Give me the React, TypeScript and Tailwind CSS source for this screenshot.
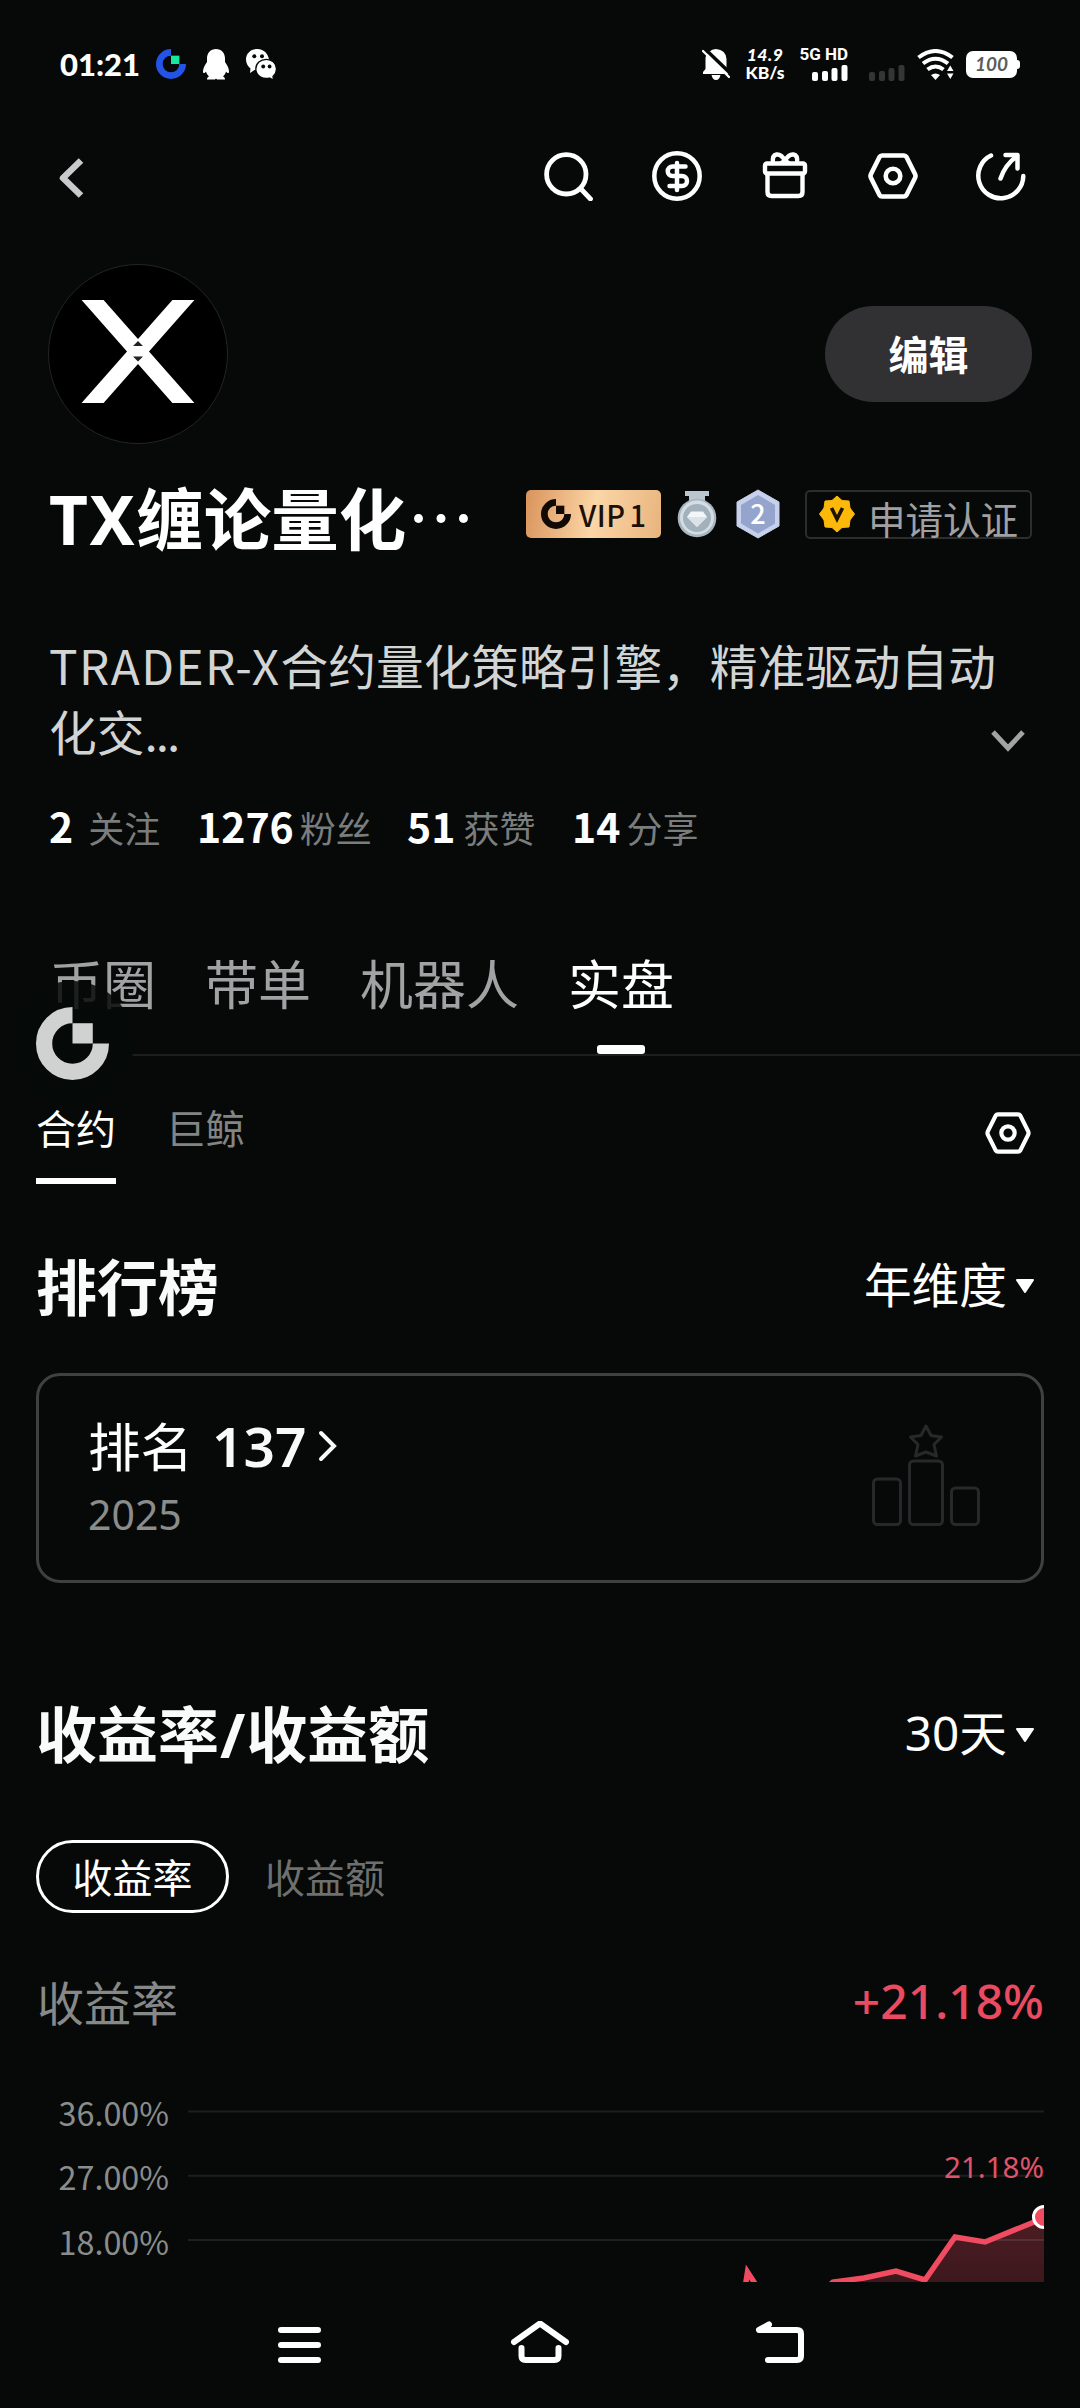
import type { ReactNode } from "react";

const STATS = [
  { value: "2", label: "关注", width: "w-[148px]", gap: "gap-[15px]" },
  { value: "1276", label: "粉丝", width: "w-[210px]", gap: "gap-[6px]" },
  { value: "51", label: "获赞", width: "w-[165px]", gap: "gap-[8px]" },
  { value: "14", label: "分享", width: "w-[140px]", gap: "gap-[6px]" },
];

const TABS = ["币圈", "带单", "机器人", "实盘"];
const ACTIVE_TAB = "实盘";

const AXIS = ["36.00%", "27.00%", "18.00%"];

const LINE = "M636 214L645 206L676 202L708 195L737 204L767 161L797 166L856 142";

function GateLogo({ size, ring, square }: { size: number; ring: string; square: string }) {
  return (
    <svg width={size} height={size} viewBox="0 0 72 72" className="shrink-0">
      <path d="M36 8A28 28 0 1 0 64 36" fill="none" stroke={ring} strokeWidth="16" />
      <rect x="36" y="16" width="20" height="20" fill={square} />
    </svg>
  );
}

function HexIcon({ className }: { className: string }) {
  return (
    <svg viewBox="0 0 50 46" className={className} fill="none" stroke="#fff" strokeWidth="4.6" strokeLinejoin="round">
      <path d="M14 2.500H36Q37.600 2.500 38.500 4L47 21Q48 23 47 25L38.500 42Q37.600 43.500 36 43.500H14Q12.400 43.500 11.500 42L3 25Q2 23 3 21L11.500 4Q12.400 2.500 14 2.500Z" />
      <circle cx="25" cy="23" r="7.300" />
    </svg>
  );
}

function SignalBars({ color }: { color: string }) {
  return (
    <svg width="36" height="16" viewBox="0 0 36 16" fill={color}>
      <rect x="0" y="7" width="6" height="9" rx="2" />
      <rect x="10" y="6" width="6" height="10" rx="2" />
      <rect x="19.500" y="3" width="6" height="13" rx="2" />
      <rect x="29.500" y="0" width="6" height="16" rx="2" />
    </svg>
  );
}

function StatusBar() {
  return (
    <div className="flex h-[128px] shrink-0 items-center pl-[60px] pr-[60px]">
      <span className="w-[96px] font-['Lato','Liberation_Sans',sans-serif] text-[31px] leading-none font-black">
        01:21
      </span>
      <GateLogo size={30} ring="#2354e6" square="#17e6a1" />
      {/* QQ */}
      <svg width="26" height="31" viewBox="0 0 26 31" fill="#fff" className="ml-[17px]">
        <path d="M13 0C7.500 0 4 4 4 9.500V13C2 16 0 19 0 22.500C0 24.500 1.500 24.500 3 22.500C3.500 24.500 4.500 26 6 27.500C4.500 28 4 29 4 30.500H12L13 29.500L14 30.500H22C22 29 21.500 28 20 27.500C21.500 26 22.500 24.500 23 22.500C24.500 24.500 26 24.500 26 22.500C26 19 24 16 22 13V9.500C22 4 18.500 0 13 0Z" />
      </svg>
      {/* WeChat */}
      <svg width="31" height="31" viewBox="0 0 31 31" className="ml-[17px]">
        <path d="M11.500 0C5 0 0 4.500 0 10.500C0 14.500 2 17.500 4.500 19.500L4 24L8.500 21H12L23 11C22.500 5 18 0 11.500 0Z" fill="#fff" />
        <circle cx="8.300" cy="7.300" r="2" fill="#060908" />
        <circle cx="16" cy="7.300" r="2" fill="#060908" />
        <path d="M20.300 10.300C26 10.300 30.500 14.500 30.500 20C30.500 23 29 25.500 27 27.500L27.500 31L23.500 29C17 31 9.800 26.500 9.800 20C9.800 14.500 14.500 10.300 20.300 10.300Z" fill="#fff" stroke="#060908" strokeWidth="1.300" />
        <circle cx="17.200" cy="17.500" r="1.900" fill="#060908" />
        <circle cx="23.600" cy="17.500" r="1.900" fill="#060908" />
      </svg>

      <svg width="28" height="31" viewBox="0 0 28 31" className="ml-auto" fill="#fff">
        <path d="M7 3Q10 0 14 0Q24 1 24.500 10V20L26.500 23L27 25H1V23L3.500 20V9Q4 5 7 3Z" />
        <path d="M9.500 26H18.500Q17.500 31 14 31Q10.500 31 9.500 26Z" />
        <path d="M2 -1L29 25" stroke="#060908" strokeWidth="3.500" />
        <path d="M1 2L27 28" stroke="#fff" strokeWidth="2.300" strokeLinecap="round" />
      </svg>
      <div className="ml-[16px] flex w-[38px] flex-col items-center font-['Lato',sans-serif] text-[17.500px] leading-[18px] font-black">
        <span className="tracking-[0.5px] italic">14.9</span>
        <span>KB/s</span>
      </div>
      <div className="ml-[16px] flex w-[48px] flex-col items-end gap-[4px]">
        <span className="font-['Roboto',sans-serif] text-[17px] leading-[13px] font-bold whitespace-nowrap">5G HD</span>
        <SignalBars color="#fff" />
      </div>
      <div className="mt-[17px] ml-[21px]">
        <SignalBars color="#343636" />
      </div>
      <svg width="38" height="31" viewBox="0 0 38 31" fill="none" stroke="#fff" strokeWidth="4" className="ml-[12px]">
        <path d="M1.500 8.500Q18.500 -4.500 35.500 8.500" />
        <path d="M6 14.500Q18.500 5 31 14.500" />
        <path d="M10.500 20.500Q18.500 14.500 26.500 20.500" />
        <path d="M14 26Q18.500 23 23 26L18.500 31Z" fill="#fff" stroke="none" />
        <path d="M30 22L33.300 16.500L36.500 22ZM30 24.500L33.300 30L36.500 24.500Z" fill="#fff" stroke="none" />
      </svg>
      <div className="ml-[11px] flex items-center">
        <div className="flex h-[27px] w-[51px] items-center justify-center rounded-[7px] bg-white font-['Lato',sans-serif] text-[19px] font-bold text-[#5c5c5c] italic">
          100
        </div>
        <div className="h-[9px] w-[3px] rounded-r-sm bg-white" />
      </div>
    </div>
  );
}

function TopBar() {
  return (
    <div className="flex h-[96px] shrink-0 items-center pr-[54px] pl-[56px]">
      <svg width="28" height="40" viewBox="0 0 28 40" fill="none" stroke="#c9cacc" strokeWidth="6.500" className="mt-[3px]">
        <path d="M25 2.500L7 20L25 37.500" strokeLinejoin="round" />
      </svg>
      <div className="ml-auto flex items-center gap-[58px]">
        <svg width="50" height="50" viewBox="0 0 50 50" fill="none" stroke="#fff" strokeWidth="4.800" strokeLinecap="round">
          <circle cx="22.300" cy="23.300" r="19.700" />
          <path d="M37 38L46.500 48" />
        </svg>
        <svg width="50" height="50" viewBox="0 0 50 50" fill="none" stroke="#fff" strokeWidth="4.500" strokeLinecap="round">
          <circle cx="25" cy="25" r="22.700" />
          <path d="M33.500 15.500H20.500A4.700 4.700 0 0 0 20.500 25H30A4.900 4.900 0 0 1 30 35H17.500M25 12V39" />
        </svg>
        <svg width="50" height="50" viewBox="0 0 50 50" fill="none" stroke="#fff" strokeWidth="4.400" strokeLinejoin="round">
          <rect x="5" y="12.500" width="40" height="10" rx="2" />
          <path d="M7.500 22.500V41Q7.500 45 11.500 45H38.500Q42.500 45 42.500 41V22.500" />
          <path d="M13 12.500C11.500 1 20 1 25 9.500C30 1 38.500 1 37 12.500" />
          <path d="M20 12.500L25 8.500L30 12.500" strokeWidth="3" />
        </svg>
        <HexIcon className="h-[46px] w-[50px]" />
        <svg width="50" height="50" viewBox="0 0 50 50" fill="none" stroke="#fff" strokeWidth="4.500" strokeLinecap="round" strokeLinejoin="round">
          <path d="M15 4.500A22.500 22.500 0 1 0 47.300 25" />
          <path d="M24.500 27.500Q29 14 41 5M29.500 4H41.500V17.500" />
        </svg>
      </div>
    </div>
  );
}

function Badges() {
  return (
    <div className="flex items-center">
      <div className="flex h-[48px] w-[135px] items-center rounded-[5px] bg-linear-100 from-[#d9935b] via-[#fbd6a6] to-[#e8b47e] pl-[15px] text-[29px] font-medium text-[#1d1008]">
        <GateLogo size={30} ring="#120904" square="#120904" />
        <span className="ml-[8px] leading-none tracking-[0.5px]">VIP</span>
        <span className="ml-[4px] leading-none">1</span>
      </div>
      <svg width="40" height="48" viewBox="0 0 40 48" className="ml-[16px]">
        <path d="M8 1H32V6H28V12H12V6H8Z" fill="#b9c6cf" />
        <circle cx="20" cy="28" r="19.300" fill="#a9b6c1" />
        <circle cx="20" cy="27.500" r="17" fill="#d3dde4" />
        <circle cx="20" cy="28" r="14" fill="#a3b1bd" />
        <path d="M14 21.500H26L30 27L20 37L10 27Z" fill="#f3f6f8" />
        <path d="M10 27H30L20 37Z" fill="#dbe3e9" />
      </svg>
      <svg width="44" height="50" viewBox="0 0 44 50" className="ml-[19px]">
        <path d="M22 1L43 13V37L22 49L1 37V13Z" fill="#c6d1ec" stroke="#c6d1ec" strokeLinejoin="round" />
        <path d="M22 6L39 16V34.500L22 44.500L5 34.500V16Z" fill="#95a4cd" />
        <text x="22" y="34.500" textAnchor="middle" fill="#fff" fontSize="27" fontWeight="500">
          2
        </text>
      </svg>
      <div className="ml-[25px] flex h-[49px] w-[227px] items-center rounded-[5px] border-2 border-[#2c2d2e] pl-[12px]">
        <svg width="36" height="38" viewBox="0 0 36 38" className="shrink-0">
          <path
            d="M18 1L23 5.500L30 6L31 13L35.500 19L31 25L30 32L23 32.500L18 37L13 32.500L6 32L5 25L0.500 19L5 13L6 6L13 5.500Z"
            fill="#fdb90a"
            stroke="#fdb90a"
            strokeLinejoin="round"
          />
          <path d="M12.500 13L18 24L23.500 13" fill="none" stroke="#1c1400" strokeWidth="3.600" />
        </svg>
        <span className="mt-[7px] ml-[13px] text-[37.500px] leading-[40px] whitespace-nowrap text-[#a0a0a3]">申请认证</span>
      </div>
    </div>
  );
}

function SectionTitle({ title, children }: { title: ReactNode; children: ReactNode }) {
  return (
    <div className="flex h-[80px] shrink-0 items-center justify-between pr-[46px] pl-[36px]">
      <h2 className="-mt-[5px] text-[61px] leading-[80px] font-bold text-[#f9fafa]">{title}</h2>
      <div className="flex items-center gap-[9px]">
        <div className="-mt-[8px] text-[47.700px] leading-[80px]">{children}</div>
        <svg width="18" height="14" viewBox="0 0 18 14" fill="#fff" stroke="#fff" strokeWidth="2" strokeLinejoin="round" className="mb-[3px]">
          <path d="M1 1H17L9 13Z" />
        </svg>
      </div>
    </div>
  );
}

function RankCard() {
  return (
    <div className="mx-[36px] mt-[46px] flex h-[210px] shrink-0 justify-between rounded-[24px] border-[3px] border-[#3f4040] pr-[61px] pl-[49px]">
      <div className="pt-[36px]">
        <div className="flex h-[68px] items-center text-[52.500px] leading-[68px]">
          <span className="-mt-[4px]">排名</span>
          <span className="ml-[19px] font-['Noto_Sans',sans-serif] text-[55px] font-semibold text-[#f8f9f9]">137</span>
          <svg width="19" height="32" viewBox="0 0 19 32" fill="none" stroke="#f8f9f9" strokeWidth="4" strokeLinecap="round" className="ml-[12px]">
            <path d="M3 3L16 16L3 29" />
          </svg>
        </div>
        <div className="mt-[2px] font-['Noto_Sans',sans-serif] text-[41px] leading-[64px] text-[#8b8c8c]">2025</div>
      </div>
      <svg width="108" height="104" viewBox="0 0 108 104" fill="none" stroke="#27282a" strokeWidth="3" strokeLinejoin="round" className="mt-[47px]">
        <rect x="1.500" y="56" width="27" height="45.500" rx="4" />
        <rect x="37.500" y="38" width="33" height="63.500" rx="4" />
        <rect x="79.500" y="65" width="27" height="36.500" rx="4" />
        <path d="M54 3L59 12.500L69.500 14L62 21.500L64.500 33L54 29L43.500 33L46 21.500L38.500 14L49 12.500Z" />
      </svg>
    </div>
  );
}

function Chart() {
  return (
    <div className="mt-[47px] flex h-[202px] shrink-0">
      <div className="w-[169px] text-right text-[32.300px] text-[#8b8d8c]">
        {AXIS.map((tick) => (
          <div key={tick} className="h-[64.300px] leading-[64px]">
            {tick}
          </div>
        ))}
      </div>
      <svg width="856" height="202" viewBox="0 4 856 202" className="ml-[19px]">
        <defs>
          <linearGradient id="area" x1="0" y1="0" x2="0" y2="1">
            <stop offset="0" stopColor="#f04b61" stopOpacity="0.3" />
            <stop offset="1" stopColor="#f04b61" stopOpacity="0.22" />
          </linearGradient>
        </defs>
        <path d={`${LINE}V216Z`} fill="url(#area)" />
        {[35.5, 99.7, 164].map((y) => (
          <path key={y} d={`M0 ${y}H856`} stroke="#fff" strokeOpacity="0.09" strokeWidth="2" />
        ))}
        <g fill="none" stroke="#f04b61" strokeWidth="5.500" strokeMiterlimit="10">
          <path d={LINE} />
          <path d="M555 225L559.500 196L577 223" />
        </g>
        <circle cx="856" cy="141" r="10.500" fill="#f04b61" stroke="#fff" strokeWidth="3" />
        <text x="856" y="102" textAnchor="end" fill="#e0536a" fontSize="29.500" fontFamily="Noto Sans, sans-serif">
          21.18%
        </text>
      </svg>
    </div>
  );
}

function NavBar() {
  return (
    <div className="flex h-[126px] shrink-0 items-center justify-center gap-[182px]">
      <svg width="58" height="48" viewBox="0 0 58 48" fill="none" stroke="#fff" strokeWidth="6" strokeLinecap="round">
        <path d="M10 9H47M10 24H47M10 39H47" />
      </svg>
      <svg width="58" height="48" viewBox="0 0 58 48" fill="none" stroke="#fff" strokeWidth="6" strokeLinecap="round" strokeLinejoin="round">
        <path d="M3 21L29 2.500L55 21M10.500 27V35Q10.500 39 14.500 39H43.500Q47.500 39 47.500 35V27" />
      </svg>
      <svg width="58" height="48" viewBox="0 0 58 48" fill="none" stroke="#fff" strokeWidth="6" strokeLinecap="round" strokeLinejoin="round">
        <path d="M18 3.500L8 9H46Q50 9 50 13V35Q50 39 46 39H17" />
      </svg>
    </div>
  );
}

export default function App() {
  return (
    <div
      lang="zh-CN"
      className="flex h-[2408px] w-[1080px] flex-col overflow-hidden bg-[#060908] font-['Noto_Sans_CJK_SC',sans-serif] text-white"
    >
      <StatusBar />
      <TopBar />

      <div className="mt-[40px] flex h-[180px] shrink-0 items-center justify-between pr-[48px] pl-[48px]">
        <div className="flex h-[180px] w-[180px] items-center justify-center rounded-full border border-[#232424] bg-black">
          <svg width="114" height="103" viewBox="0 0 114 103" className="mb-[5px]" stroke="#fff" strokeWidth="16.500">
            <path d="M1 -12L113 115M113 -12L1 115" />
            <path d="M57 41L62 46H52ZM57 61.500L62 56.500H52Z" fill="#222" stroke="none" />
          </svg>
        </div>
        <button className="h-[96px] w-[207px] rounded-full bg-[#313134] pb-[2px] text-[40px] font-bold">编辑</button>
      </div>

      <div className="mt-[22px] flex h-[96px] shrink-0 items-center justify-between pr-[48px] pl-[49px]">
        <h1 className="flex items-center text-[67.500px] leading-[96px] whitespace-nowrap">
          <span className="pt-[10px] font-['Noto_Sans','Noto_Sans_CJK_SC',sans-serif] font-bold">
            <span className="tracking-[1.500px]">TX</span>缠论量化
          </span>
          <span className="pt-[2px] pl-[1px]">…</span>
        </h1>
        <Badges />
      </div>

      <div className="mt-[70px] flex h-[132px] shrink-0 items-end justify-between pr-[55px] pl-[49px] text-[#d3d5d4]">
        <p className="w-[960px] text-[47.700px] leading-[66px]">
          <span className="tracking-[1.500px]">TRADER-X</span>合约量化策略引擎，精准驱动自动化交
          <span className="tracking-[-2px]">...</span>
        </p>
        <svg width="34" height="22" viewBox="0 0 34 22" fill="none" stroke="#a2a4a4" strokeWidth="5" className="-ml-[20px] mb-[12px]">
          <path d="M2 2L17 18L32 2" />
        </svg>
      </div>

      <div className="mt-[37px] flex h-[50px] shrink-0 items-center pl-[49px]">
        {STATS.map((s) => (
          <div key={s.label} className={`flex items-baseline ${s.width} ${s.gap}`}>
            <span className="text-[41px] leading-[50px] font-bold">{s.value}</span>
            <span className="text-[36px] leading-[50px] text-[#7b7d7c]">{s.label}</span>
          </div>
        ))}
      </div>

      <div className="relative mt-[96px] h-[109px] shrink-0">
        <div className="flex h-[107px] gap-[49px] pl-[50px] text-[53px] leading-[70px] text-[#a1a2a4]">
          {TABS.map((tab) => (
            <div key={tab} className={tab === ACTIVE_TAB ? "flex flex-col items-center text-white" : ""}>
              {tab}
              {tab === ACTIVE_TAB && <div className="mt-[28px] h-[9px] w-[48px] rounded-[3px] bg-white" />}
            </div>
          ))}
        </div>
        <div className="ml-[131px] h-[2px] bg-[#1d1f1f]" />
        <div className="absolute top-[34px] left-[10px] flex h-[124px] w-[124px] items-center justify-center rounded-full bg-[#060908]/85">
          <GateLogo size={73} ring="#d0d2d1" square="#d0d2d1" />
        </div>
      </div>

      <div className="flex h-[128px] shrink-0 justify-between pr-[48px] pl-[36px] text-[40px]">
        <div className="flex gap-[50px]">
          <div className="flex flex-col justify-between border-b-[6px] border-white pt-[41px] leading-[60px]">合约</div>
          <div className="pt-[41px] text-[39.500px] leading-[60px] text-[#838584]">巨鲸</div>
        </div>
        <HexIcon className="mt-[56px] h-[42px] w-[48px]" />
      </div>

      <div className="h-[63px] shrink-0" />
      <SectionTitle title="排行榜">年维度</SectionTitle>
      <RankCard />

      <div className="h-[113px] shrink-0" />
      <SectionTitle
        title={
          <>
            收益率<span className="mx-px font-['Noto_Sans',sans-serif]">/</span>收益额
          </>
        }
      >
        <span className="font-['Noto_Sans',sans-serif]">30</span>天
      </SectionTitle>

      <div className="mt-[64px] flex h-[72px] shrink-0 items-center gap-[36px] pl-[36px] text-[40px]">
        <div className="flex h-[73px] w-[193px] items-center justify-center rounded-full border-[3px] border-white leading-none">
          收益率
        </div>
        <span className="leading-none text-[#6e706f]">收益额</span>
      </div>

      <div className="mt-[59px] flex h-[60px] shrink-0 items-center justify-between pr-[36px] pl-[37px]">
        <span className="text-[47px] leading-[60px] text-[#878988]">收益率</span>
        <span className="font-['Noto_Sans',sans-serif] text-[48px] leading-[60px] font-medium text-[#ea4b61]">+21.18%</span>
      </div>

      <div className="h-[2px] shrink-0" />
      <Chart />
      <NavBar />
    </div>
  );
}
